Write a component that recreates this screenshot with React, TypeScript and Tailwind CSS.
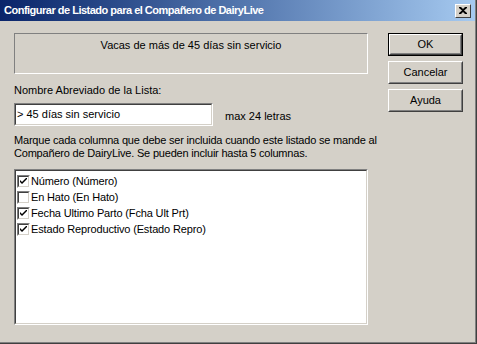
import React from "react";

const columns = [
  { label: "Número (Número)", checked: true },
  { label: "En Hato (En Hato)", checked: false },
  { label: "Fecha Ultimo Parto (Fcha Ult Prt)", checked: true },
  { label: "Estado Reproductivo (Estado Repro)", checked: true },
];

function CheckBox({ checked }: { checked: boolean }) {
  return (
    <div className="w-[13px] h-[13px] bg-white border border-t-[#808080] border-l-[#808080] border-r-white border-b-white shrink-0">
      <div className="w-full h-full border border-t-[#404040] border-l-[#404040] border-r-[#d4d0c8] border-b-[#d4d0c8] flex items-center justify-center">
        {checked && (
          <svg width="7" height="7" viewBox="0 0 7 7">
            <path d="M0 2 L0 4 L2 6 L7 1 L7 -1 L2 4 Z" fill="#000" />
          </svg>
        )}
      </div>
    </div>
  );
}

function Button({ label, isDefault }: { label: string; isDefault?: boolean }) {
  return (
    <div className={`w-[75px] h-[23px] ${isDefault ? "border border-black" : ""}`}>
      <div className="w-full h-full border border-t-white border-l-white border-r-[#404040] border-b-[#404040]">
        <div className="w-full h-full border border-t-[#d4d0c8] border-l-[#d4d0c8] border-r-[#808080] border-b-[#808080] flex items-center justify-center text-[11px] text-black">
          {label}
        </div>
      </div>
    </div>
  );
}

export default function App() {
  return (
    <div
      className="w-[477px] h-[344px] bg-[#d4d0c8] border-r border-b border-r-[#404040] border-b-[#404040] overflow-hidden"
      style={{ fontFamily: '"Liberation Sans", Arial, sans-serif' }}
    >
      <div className="h-full border-r border-b border-r-[#808080] border-b-[#808080] flex flex-col">
        {/* Title bar */}
        <div className="h-[21px] flex items-center justify-between pl-[4px] pr-[4px] bg-gradient-to-r from-[#0a246a] to-[#a6caf0]">
          <span className="text-[11px] font-bold text-white leading-none tracking-[-0.5px]">
            Configurar de Listado para el Compañero de DairyLive
          </span>
          <div className="w-[16px] h-[14px] bg-[#d4d0c8] border border-t-white border-l-white border-r-[#404040] border-b-[#404040] flex items-center justify-center">
            <svg width="8" height="7" viewBox="0 0 8 7">
              <path
                d="M0 0h2l2 2 2-2h2v1L5 3.5 8 6v1H6L4 5 2 7H0V6l3-2.5L0 1z"
                fill="#000"
              />
            </svg>
          </div>
        </div>

        {/* Body */}
        <div className="flex flex-1 pl-[14px] pt-[12px] pr-[12px]">
          <div className="w-[354px] flex flex-col">
            <div className="h-[41px] border border-t-[#808080] border-l-[#808080] border-r-white border-b-white flex justify-center pt-[3px] text-[11px] text-black">
              Vacas de más de 45 días sin servicio
            </div>

            <div className="mt-[10px] text-[11px] text-black leading-[13px]">
              Nombre Abreviado de la Lista:
            </div>

            <div className="mt-[6px] flex items-center">
              <div className="w-[199px] h-[23px] bg-white border border-t-[#808080] border-l-[#808080] border-r-white border-b-white">
                <div className="w-full h-full border border-t-[#404040] border-l-[#404040] border-r-[#d4d0c8] border-b-[#d4d0c8] flex items-center pl-[1px] text-[11px] text-black">
                  &gt; 45 días sin servicio
                </div>
              </div>
              <span className="ml-[12px] mt-[3px] text-[11px] text-black">max 24 letras</span>
            </div>

            <div className="mt-[8px] text-[11px] text-black leading-[13px] whitespace-nowrap tracking-[-0.2px]">
              Marque cada columna que debe ser incluida cuando este listado se mande al
              <br />
              Compañero de DairyLive. Se pueden incluir hasta 5 columnas.
            </div>

            <div className="mt-[9px] h-[156px] bg-white border border-t-[#808080] border-l-[#808080] border-r-white border-b-white">
              <div className="w-full h-full border border-t-[#404040] border-l-[#404040] border-r-[#d4d0c8] border-b-[#d4d0c8] pt-[2px] pl-[1px]">
                {columns.map((c) => (
                  <div key={c.label} className="h-[16px] flex items-center gap-[1px] text-[11px] text-black tracking-[-0.15px]">
                    <CheckBox checked={c.checked} />
                    <span>{c.label}</span>
                  </div>
                ))}
              </div>
            </div>
          </div>

          <div className="ml-[20px] flex flex-col gap-[5px]">
            <Button label="OK" isDefault />
            <Button label="Cancelar" />
            <Button label="Ayuda" />
          </div>
        </div>
      </div>
    </div>
  );
}
